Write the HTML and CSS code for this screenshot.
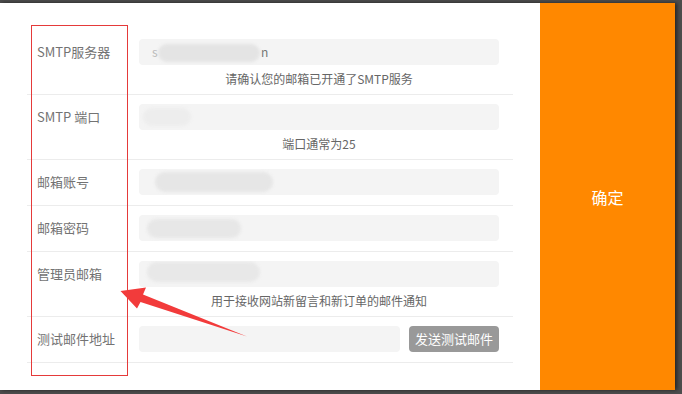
FILE: index.html
```html
<!DOCTYPE html>
<html lang="zh-CN">
<head>
<meta charset="utf-8">
<title>SMTP 设置</title>
<link rel="stylesheet" href="styles.css">
</head>
<body>
<div class="dialog">
  <div class="form">
    <div class="row">
      <div class="label">SMTP服务器</div>
      <div class="field">
        <div class="input"><span class="blob b1"></span><span class="ch c1">s</span><span class="ch c2">n</span></div>
        <div class="hint">请确认您的邮箱已开通了SMTP服务</div>
      </div>
    </div>
    <div class="row">
      <div class="label">SMTP 端口</div>
      <div class="field">
        <div class="input"><span class="blob b2"></span></div>
        <div class="hint">端口通常为25</div>
      </div>
    </div>
    <div class="row">
      <div class="label">邮箱账号</div>
      <div class="field">
        <div class="input"><span class="blob b3"></span></div>
      </div>
    </div>
    <div class="row">
      <div class="label">邮箱密码</div>
      <div class="field">
        <div class="input"><span class="blob b4"></span></div>
      </div>
    </div>
    <div class="row">
      <div class="label">管理员邮箱</div>
      <div class="field">
        <div class="input"><span class="blob b5"></span></div>
        <div class="hint">用于接收网站新留言和新订单的邮件通知</div>
      </div>
    </div>
    <div class="row">
      <div class="label">测试邮件地址</div>
      <div class="field field-inline">
        <div class="input input-short"></div>
        <button class="btn-test" type="button">发送测试邮件</button>
      </div>
    </div>
    <div class="annot-box"></div>
    <svg class="annot-arrow" width="140" height="60" viewBox="115 284 140 60" xmlns="http://www.w3.org/2000/svg">
      <polygon points="120.5,291 146,287.5 143,294.5 247,336.5 140.5,302 137,308.5" fill="#f23b3b"/>
    </svg>
  </div>
  <div class="confirm">确定</div>
</div>
</body>
</html>
```

FILE: styles.css
```css
* { box-sizing: border-box; }
html, body { margin: 0; padding: 0; }
body {
  background: #4d4d4d;
  width: 682px;
  height: 394px;
  overflow: hidden;
  padding-top: 3px;
  font-family: "Noto Sans CJK SC", "Microsoft YaHei", sans-serif;
}
.dialog {
  display: flex;
  width: 675px;
  height: 387px;
  box-shadow: 2px 0 4px rgba(0, 0, 0, 0.55);
}
.form {
  position: relative;
  width: 540px;
  background: #fff;
  padding: 27px 0 0 27px;
}
.row {
  width: 486px;
  display: flex;
  padding: 9px 0 10px 0;
  border-bottom: 1px solid #ececec;
}
.label {
  width: 112px;
  padding-left: 10px;
  height: 26px;
  line-height: 26px;
  font-size: 13px;
  color: #737373;
  white-space: nowrap;
}
.field {
  width: 360px;
  display: flex;
  flex-direction: column;
}
.field-inline {
  flex-direction: row;
  gap: 9px;
}
.input {
  position: relative;
  height: 26px;
  background: #f4f4f4;
  border-radius: 4px;
  overflow: hidden;
}
.input-short { width: 261px; }
.hint {
  margin: 6px 0 -3px;
  line-height: 16px;
  height: 16px;
  font-size: 12px;
  color: #666;
  text-align: center;
  white-space: nowrap;
}
.btn-test {
  width: 90px;
  height: 26px;
  border: 0;
  border-radius: 4px;
  background: #999;
  color: #fff;
  font-family: inherit;
  font-size: 13px;
  padding: 0;
  line-height: 26px;
}
.blob {
  position: absolute;
  border-radius: 10px;
  filter: blur(1.5px);
}
.b1 { left: 19px; top: 5px; width: 102px; height: 18px; background: #e4e4e4; }
.b2 { left: 4px; top: 4px; width: 48px; height: 18px; background: #ededed; }
.b3 { left: 16px; top: 3px; width: 118px; height: 20px; background: #e6e6e6; }
.b4 { left: 8px; top: 4px; width: 94px; height: 19px; background: #e7e7e7; }
.b5 { left: 8px; top: 1px; width: 113px; height: 20px; background: #e8e8e8; }
.ch {
  position: absolute;
  top: 0;
  line-height: 26px;
  font-size: 12px;
  color: #888;
}
.c1 { left: 13px; color: #bbb; }
.c2 { left: 122px; color: #777; }
.annot-box {
  position: absolute;
  left: 31px;
  top: 22px;
  width: 97px;
  height: 351px;
  border: 1px solid #e53a3a;
}
.annot-arrow {
  position: absolute;
  left: 115px;
  top: 281px;
}
.confirm {
  width: 135px;
  background: #ff8800;
  color: #fff;
  font-size: 16px;
  display: flex;
  align-items: center;
  justify-content: center;
}
```
